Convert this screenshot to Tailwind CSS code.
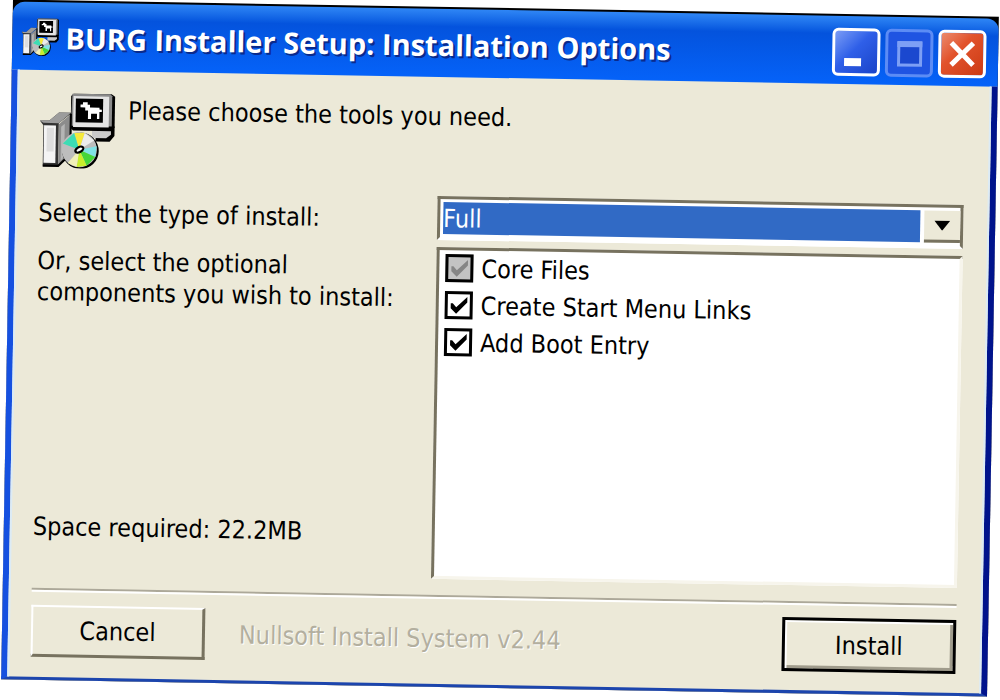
<!DOCTYPE html>
<html lang="en">
<head>
  <meta charset="UTF-8"/>
  <meta name="viewport" content="width=device-width, initial-scale=1.0"/>
  <title>BURG Installer Setup</title>
  <script src="https://cdn.jsdelivr.net/npm/@tailwindcss/browser@4"></script>
</head>
<body class="min-h-screen overflow-hidden bg-white flex px-[7px] pt-2 pb-3 font-['DejaVu_Sans_Condensed','Noto_Sans',sans-serif] text-[25px] leading-[31px] text-black">

  <!-- installer icon, used in the title bar and in the header -->
  <svg class="hidden">
    <symbol id="installer" viewBox="0 0 32 32">
      <path d="M24 14h7.500v4l-2 2.500h-6z" fill="#000"/>
      <path d="M22 14.500h8v3l-2 1.500h-6z" fill="#c9c9c9"/>
      <path d="M14 .5h16l1.500 1v13L30 16H14l-1-1V1.500z" fill="#000"/>
      <path d="M13.500.500H29.500l.8.8V14H13z" fill="#8a8a8a"/>
      <path d="M14 1.500h15v13H14z" fill="#e4e4e4"/>
      <path d="M15 2.500h11.500v10H15z" fill="#000"/>
      <path d="M17 5h1V4h2v1h1v1.200h4V7h1v1h-1v3h-1V8.800h-2.500V11h-1.300V7.500H19V6.200h-2z" fill="#fff"/>
      <path d="M0 12h4l4-3.500h5.500L8 13v18H1.500V14z" fill="#333"/>
      <path d="M0 12h4l4-3.500h5L8 13H1.500z" fill="#9c9c9c"/>
      <path d="M1.800 14h5v15.800h-5z" fill="#f4f4f4"/>
      <path d="M3 15h3v10H3z" fill="#dedede"/>
      <path d="M8 13.500l4.800-4.200V26L8 30.500z" fill="#8c8c8c"/>
      <path d="M9 14.500l1.500-1.300v14L9 28.800z" fill="#b5b5b5"/>
      <path d="M13 9v17l-5 5H1.500" fill="none" stroke="#000" stroke-width=".9"/>
      <circle cx="17.300" cy="24.500" r="7.700" fill="#000"/>
      <circle cx="16.800" cy="24" r="7.400" fill="#bdbdbd"/>
      <path d="M16.800 24L14.500 17l4.500-.1z" fill="#f5e93c"/>
      <path d="M16.800 24L9.800 21.500 14.500 17z" fill="#3ddcb4"/>
      <path d="M16.800 24L19 17l4 3z" fill="#ececec"/>
      <path d="M16.800 24l7.300-1.500-.5 4.500z" fill="#7fe3e6"/>
      <path d="M16.800 24l6.800 3-3.600 3.700z" fill="#45d63a"/>
      <path d="M16.800 24l3.200 6.700-4.200.6z" fill="#c8ee2c"/>
      <path d="M16.800 24l-1 7.300-3.800-1.600z" fill="#f1f0b8"/>
      <ellipse cx="16.800" cy="24" rx="2.300" ry="1.500" fill="#000" transform="rotate(-30 16.800 24)"/>
      <ellipse cx="16.800" cy="24" rx="1.300" ry=".6" fill="#fff" transform="rotate(-30 16.800 24)"/>
    </symbol>
    <symbol id="tick" viewBox="0 0 28 28">
      <path d="M6 12v5l5.500 5.500L22.500 11V5.500L11.500 16 8 12z" fill="currentColor"/>
    </symbol>
  </svg>

  <main class="flex-1 flex flex-col rotate-1 bg-black">

    <header class="h-[70px] shrink-0 mt-[2px] -mb-[2px] flex items-start gap-[6px] pl-[9px] pr-3 pt-3 rounded-t-xl bg-linear-to-b from-[#2f86f5] via-[#0453dd] via-25% to-[#0563fa]">
      <svg class="size-[38px] mt-1"><use href="#installer"/></svg>
      <h1 class="flex-1 mt-2 whitespace-nowrap font-['Open_Sans',sans-serif] font-bold text-[29px] leading-8 text-white text-shadow-[2px_2px_0_#0a2a8c]">BURG Installer Setup: Installation Options</h1>
      <div class="flex gap-[5px]">
        <button aria-label="Minimize" class="size-12 rounded-md border-3 border-white bg-linear-to-br from-[#7b9bf5] via-[#2f5fe8] via-45% to-[#1a43c8]">
          <svg viewBox="0 0 42 42"><path d="M9 27h17v8H9z" fill="#fff"/></svg>
        </button>
        <button aria-label="Maximize" disabled class="size-12 rounded-md border-3 border-[#5c8cf5] bg-[#1f54e2]">
          <svg viewBox="0 0 42 42"><path d="M10.500 11v22h22V11z" fill="#1b48cf" stroke="#7d9ff5" stroke-width="3"/><path d="M9 9h25v6H9z" fill="#7d9ff5"/></svg>
        </button>
        <button aria-label="Close" class="size-12 rounded-md border-3 border-white bg-linear-to-br from-[#ea8a6c] via-[#e2532c] via-40% to-[#cc3a12]">
          <svg viewBox="0 0 42 42"><path d="M10 10l22 22M32 10L10 32" stroke="#fff" stroke-width="5"/></svg>
        </button>
      </div>
    </header>

    <div class="flex-1 flex flex-col border-l-6 border-r-6 border-b-3 border-l-[#1550e0] border-r-[#00138c] border-b-[#1c45ad] bg-[#ece9d8]">
      <div class="flex-1 flex flex-col border-x-2 border-[#dcebf5] pl-[21px] pr-6 pt-[22px] pb-[19px]">

        <div class="flex gap-3">
          <svg class="size-[76px]"><use href="#installer"/></svg>
          <p class="mt-[2px]">Please choose the tools you need.</p>
        </div>

        <div class="flex-1 mt-[21px] flex">
          <div class="w-[399px] flex flex-col">
            <label for="type" class="mt-2">Select the type of install:</label>
            <p class="mt-[17px]">Or, select the optional<br>components you wish to install:</p>
            <p class="mt-auto mb-[30px]">Space required: 22.2MB</p>
          </div>

          <div class="flex-1 flex flex-col gap-[7px]">
            <div class="h-11 flex border-3 border-t-[#77725f] border-l-[#77725f] border-r-[#77725f] border-b-white bg-white pt-[3px] pl-[3px] pb-[3px]">
              <select id="type" class="flex-1 appearance-none bg-[#316ac5] text-white leading-[31px] outline-none">
                <option>Full</option>
                <option>Custom</option>
              </select>
              <span class="w-9 ml-1 flex items-center justify-center bg-[#ece9d8] border-b-3 border-[#77725f] pointer-events-none">
                <svg class="w-4 h-[10px]" viewBox="0 0 16 10"><path d="M0 0h16L8 10z"/></svg>
              </span>
            </div>

            <div class="flex-1 flex flex-col gap-[9px] p-1 pl-[6px] border-3 border-t-[#77725f] border-l-[#77725f] border-r-[#f7f5ec] border-b-[#f7f5ec] bg-white">
              <label class="flex items-center gap-2 h-7">
                <span class="grid size-7 text-[#858585]">
                  <input type="checkbox" checked disabled class="col-start-1 row-start-1 appearance-none size-7 border-3 border-black bg-[#c3c3c3]">
                  <svg class="col-start-1 row-start-1 size-7 pointer-events-none"><use href="#tick"/></svg>
                </span>
                Core Files
              </label>
              <label class="flex items-center gap-2 h-7">
                <span class="grid size-7">
                  <input type="checkbox" checked class="peer col-start-1 row-start-1 appearance-none size-7 border-3 border-black bg-white">
                  <svg class="col-start-1 row-start-1 size-7 pointer-events-none invisible peer-checked:visible"><use href="#tick"/></svg>
                </span>
                Create Start Menu Links
              </label>
              <label class="flex items-center gap-2 h-7">
                <span class="grid size-7">
                  <input type="checkbox" checked class="peer col-start-1 row-start-1 appearance-none size-7 border-3 border-black bg-white">
                  <svg class="col-start-1 row-start-1 size-7 pointer-events-none invisible peer-checked:visible"><use href="#tick"/></svg>
                </span>
                Add Boot Entry
              </label>
            </div>
          </div>
        </div>

        <hr class="mt-4 border-t-2 border-t-[#aca899] border-b-2 border-b-white">

        <footer class="mt-3 flex items-center">
          <button class="w-[174px] h-[52px] border-t-2 border-l-2 border-r-3 border-b-3 border-t-white border-l-white border-r-[#77725f] border-b-[#77725f]">Cancel</button>
          <p class="flex-1 ml-[34px] text-[#b3af9f] text-shadow-[1px_1px_0_#ffffff]">Nullsoft Install System v2.44</p>
          <button class="w-[174px] h-[54px] border-3 border-black shadow-[inset_2px_2px_0_#fff,inset_-3px_-3px_0_#a09c8c]">Install</button>
        </footer>
      </div>
    </div>
  </main>

</body>
</html>
